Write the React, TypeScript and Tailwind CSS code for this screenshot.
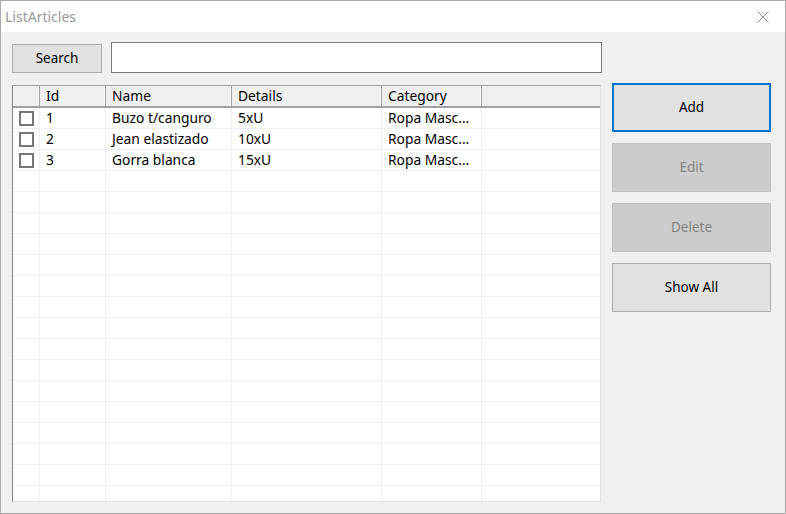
const columns = [
  { key: "check", label: "", width: "w-[27px]" },
  { key: "id", label: "Id", width: "w-[66px]" },
  { key: "name", label: "Name", width: "w-[126px]" },
  { key: "details", label: "Details", width: "w-[150px]" },
  { key: "category", label: "Category", width: "w-[100px]" },
];

const articles = [
  { id: "1", name: "Buzo t/canguro", details: "5xU", category: "Ropa Masc..." },
  { id: "2", name: "Jean elastizado", details: "10xU", category: "Ropa Masc..." },
  { id: "3", name: "Gorra blanca", details: "15xU", category: "Ropa Masc..." },
];

const emptyRows = Array.from({ length: 17 });

function CloseIcon() {
  return (
    <svg width="12" height="12" viewBox="0 0 12 12" aria-hidden="true">
      <path d="M0.5 0.5L11.5 11.5M11.5 0.5L0.5 11.5" stroke="#8a8a8a" strokeWidth="1" />
    </svg>
  );
}

function Row({ cells }: { cells?: string[] }) {
  return (
    <div className="flex h-[21px] shrink-0 border-b border-[#f0f0f0]">
      <div className="flex w-[27px] items-center justify-center border-r border-[#f0f0f0]">
        {cells && <span className="h-[15px] w-[15px] border-2 border-[#767676] bg-white" />}
      </div>
      {columns.slice(1).map((col, i) => (
        <div
          key={col.key}
          className={`${col.width} flex items-center overflow-hidden whitespace-nowrap border-r border-[#f0f0f0] pl-[6px]`}
        >
          {cells ? cells[i] : ""}
        </div>
      ))}
      <div className="flex-1" />
    </div>
  );
}

function ListView() {
  return (
    <div className="mt-[12px] flex h-[417px] w-[589px] flex-col overflow-hidden border border-t-[#a0a0a0] border-l-[#828282] border-r-[#e3e3e3] border-b-[#e3e3e3] bg-white text-[13.8px]">
      <div className="flex h-[22px] shrink-0 border-b-2 border-[#a0a0a0] bg-[#f0f0f0]">
        {columns.map((col) => (
          <div
            key={col.key}
            className={`${col.width} flex items-center border-r border-[#a0a0a0] pl-[6px] shadow-[inset_-1px_0_0_#ffffff]`}
          >
            {col.label}
          </div>
        ))}
        <div className="flex-1" />
      </div>
      {articles.map((a) => (
        <Row key={a.id} cells={[a.id, a.name, a.details, a.category]} />
      ))}
      {emptyRows.map((_, i) => (
        <Row key={i} />
      ))}
    </div>
  );
}

function SideButton({ label, state }: { label: string; state: "focus" | "disabled" | "normal" }) {
  const look =
    state === "focus"
      ? "border-2 border-[#0078d7] bg-[#e1e1e1] text-black"
      : state === "disabled"
        ? "border border-[#bfbfbf] bg-[#cccccc] text-[#838383]"
        : "border border-[#adadad] bg-[#e1e1e1] text-black";
  return (
    <button className={`flex h-[49px] w-[159px] items-center justify-center ${look}`}>{label}</button>
  );
}

export default function App() {
  return (
    <div
      className="flex h-[514px] w-[786px] flex-col border border-[#aaaaaa] bg-[#f0f0f0] text-[13.5px] text-black"
      style={{ fontFamily: '"Noto Sans", "Open Sans", sans-serif' }}
    >
      <div className="flex h-[31px] shrink-0 items-center justify-between bg-white pl-[4px] pr-[16px]">
        <span className="text-[14px] text-[#999999]">ListArticles</span>
        <CloseIcon />
      </div>

      <div className="flex pl-[11px] pt-[10px]">
        <div className="flex w-[590px] flex-col">
          <div className="flex items-center gap-[9px]">
            <button className="mt-[1px] flex h-[29px] w-[90px] items-center justify-center border border-[#adadad] bg-[#e1e1e1]">
              Search
            </button>
            <div className="h-[31px] w-[491px] border border-[#7a7a7a] bg-white" />
          </div>
          <ListView />
        </div>

        <div className="ml-[10px] flex flex-col gap-[11px] pt-[41px]">
          <SideButton label="Add" state="focus" />
          <SideButton label="Edit" state="disabled" />
          <SideButton label="Delete" state="disabled" />
          <SideButton label="Show All" state="normal" />
        </div>
      </div>
    </div>
  );
}
